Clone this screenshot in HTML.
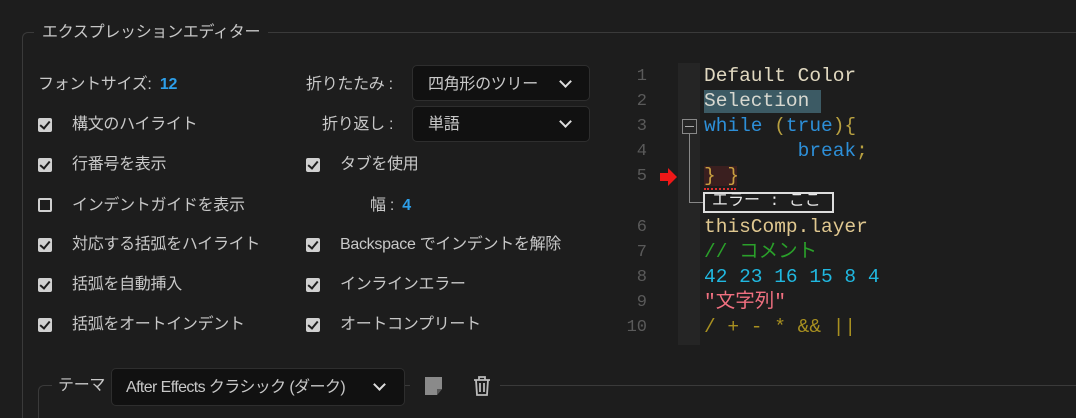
<!DOCTYPE html>
<html><head><meta charset="utf-8"><style>
html,body{margin:0;width:1076px;height:418px;overflow:hidden}
body{background:#1d1d1d;position:relative;font-family:"Liberation Sans","Noto Sans CJK JP",sans-serif;color:#c8c8c8;font-size:16px}
.a{position:absolute;white-space:nowrap;line-height:20px;letter-spacing:-0.3px}
.fs{position:absolute;left:22px;top:32px;width:1053px;height:385px;border:1px solid #3a3a3a;border-right:none;border-bottom:none;border-radius:6px 0 0 0}
.cb{position:absolute;width:14px;height:14px;background:#d0d0d0;border-radius:2px}
.cb::after{content:"";position:absolute;left:4px;top:1px;width:4px;height:8px;border:solid #1d1d1d;border-width:0 2.5px 2.5px 0;transform:rotate(40deg)}
.cb.off{background:#1d1d1d;border:2px solid #d0d0d0;width:10px;height:10px}
.cb.off::after{display:none}
.dd{position:absolute;background:#111;border:1px solid #2e2e2e;border-radius:5px;height:34px}
.chev{position:absolute;width:7px;height:7px;border:solid #ddd;border-width:0 2.5px 2.5px 0;transform:rotate(45deg)}
.blue{color:#2d9ee8;font-weight:bold}
.mono{font-family:"Liberation Mono","Noto Sans CJK JP",monospace;font-size:19.5px;line-height:25px}
.ln{position:absolute;left:620px;width:27px;text-align:right;color:#5a5a5a;font-size:17px}
.cd{position:absolute;left:704px}
</style></head><body>
<div class="fs"></div>
<div class="a" style="left:34px;top:23px;background:#1d1d1d;padding:0 8px;font-size:16px">エクスプレッションエディター</div>

<div class="a" style="left:38px;top:75px">フォントサイズ:&nbsp; <span class="blue">12</span></div>
<div class="a" style="left:306px;top:75px">折りたたみ :</div>
<div class="dd" style="left:412px;top:65px;width:176px"></div>
<div class="a" style="left:428px;top:75px">四角形のツリー</div>
<div class="chev" style="left:561px;top:77px"></div>
<div class="a" style="left:322px;top:115px">折り返し :</div>
<div class="dd" style="left:412px;top:106px;width:176px"></div>
<div class="a" style="left:428px;top:115px">単語</div>
<div class="chev" style="left:561px;top:117px"></div>

<div class="cb" style="left:38px;top:118px"></div><div class="a" style="left:72px;top:115px">構文のハイライト</div>
<div class="cb" style="left:38px;top:158px"></div><div class="a" style="left:72px;top:155px">行番号を表示</div>
<div class="cb" style="left:306px;top:158px"></div><div class="a" style="left:340px;top:155px">タブを使用</div>
<div class="cb off" style="left:38px;top:198px"></div><div class="a" style="left:72px;top:196px">インデントガイドを表示</div>
<div class="a" style="left:370px;top:196px">幅 :&nbsp; <span class="blue">4</span></div>
<div class="cb" style="left:38px;top:238px"></div><div class="a" style="left:72px;top:235px">対応する括弧をハイライト</div>
<div class="cb" style="left:306px;top:238px"></div><div class="a" style="left:340px;top:235px">Backspace でインデントを解除</div>
<div class="cb" style="left:38px;top:278px"></div><div class="a" style="left:72px;top:275px">括弧を自動挿入</div>
<div class="cb" style="left:306px;top:278px"></div><div class="a" style="left:340px;top:275px">インラインエラー</div>
<div class="cb" style="left:38px;top:318px"></div><div class="a" style="left:72px;top:315px">括弧をオートインデント</div>
<div class="cb" style="left:306px;top:318px"></div><div class="a" style="left:340px;top:315px">オートコンプリート</div>

<!-- code -->
<div style="position:absolute;left:678px;top:63px;width:22px;height:282px;background:#252525"></div>
<div style="position:absolute;left:682px;top:119px;width:15px;height:15px;border:1px solid #888;box-sizing:border-box"></div>
<div style="position:absolute;left:685px;top:126px;width:9px;height:1px;background:#aaa"></div>
<div style="position:absolute;left:689px;top:134px;width:1px;height:69px;background:#888"></div>
<div style="position:absolute;left:689px;top:202px;width:14px;height:1px;background:#888"></div>
<div class="mono">
<div class="ln" style="top:64px">1</div><div class="ln" style="top:89px">2</div><div class="ln" style="top:114px">3</div><div class="ln" style="top:139px">4</div><div class="ln" style="top:164px">5</div>
<div class="ln" style="top:215px">6</div><div class="ln" style="top:240px">7</div><div class="ln" style="top:265px">8</div><div class="ln" style="top:290px">9</div><div class="ln" style="top:315px">10</div>
<div class="cd" style="top:64px;color:#e0d8c0">Default Color</div>
<div style="position:absolute;left:704px;top:90px;width:117px;height:23px;background:#3c5a64"></div>
<div class="cd" style="top:89px;color:#d8d8d0">Selection</div>
<div class="cd" style="top:114px;color:#2d8fd8">while <span style="color:#b8a040">(</span>true<span style="color:#b8a040">){</span></div>
<div class="cd" style="top:139px;color:#2d8fd8">&nbsp;&nbsp;&nbsp;&nbsp;&nbsp;&nbsp;&nbsp;&nbsp;break<span style="color:#b8a040">;</span></div>
<div style="position:absolute;left:704px;top:166px;width:33px;height:20px;background:#3a1f1f"></div>
<div class="cd" style="top:164px;color:#c8a040">} }</div>
<div style="position:absolute;left:704px;top:185px;width:32px;height:3px;border-bottom:2px dotted #e03030"></div>
<div style="position:absolute;left:703px;top:192px;width:131px;height:21px;border:2px solid #ddd;box-sizing:border-box"></div>
<div class="cd" style="top:191px;left:712px;color:#e8e8e8;font-size:16px;line-height:21px">エラー : ここ</div>
<div class="cd" style="top:215px;color:#e0c890">thisComp.layer</div>
<div class="cd" style="top:240px;color:#2aa02a">// コメント</div>
<div class="cd" style="top:265px;color:#20b8e0">42 23 16 15 8 4</div>
<div class="cd" style="top:290px;color:#f07080">"文字列"</div>
<div class="cd" style="top:315px;color:#a89020">/ + - * &amp;&amp; ||</div>
</div>
<svg style="position:absolute;left:659px;top:167px" width="20" height="20"><path d="M1 6h8V1l9 9-9 9v-5H1z" fill="#f01818"/></svg>

<!-- theme -->
<div style="position:absolute;left:38px;top:385px;width:1037px;height:32px;border:1px solid #3a3a3a;border-right:none;border-bottom:none;border-radius:6px 0 0 0"></div>
<div class="a" style="left:52px;top:376px;background:#1d1d1d;padding:0 6px;font-size:16px">テーマ</div>
<div class="dd" style="left:111px;top:368px;width:292px;height:36px"></div>
<div class="a" style="left:126px;top:378px;letter-spacing:-0.6px">After Effects クラシック (ダーク)</div>
<div class="chev" style="left:375px;top:380px"></div>
<div style="position:absolute;left:410px;top:376px;width:90px;height:20px;background:#1d1d1d"></div>
<svg style="position:absolute;left:424px;top:376px" width="20" height="20"><path d="M1 1h17v12l-5 6H1z" fill="#8a8a8a"/><path d="M13 19v-6h5" fill="#555"/></svg>
<svg style="position:absolute;left:472px;top:375px" width="20" height="22" fill="none" stroke="#bbb" stroke-width="1.8"><path d="M2 5h16M7 5V2h6v3M4 5l1 15h10l1-15M8 8v9M12 8v9"/></svg>
</body></html>
